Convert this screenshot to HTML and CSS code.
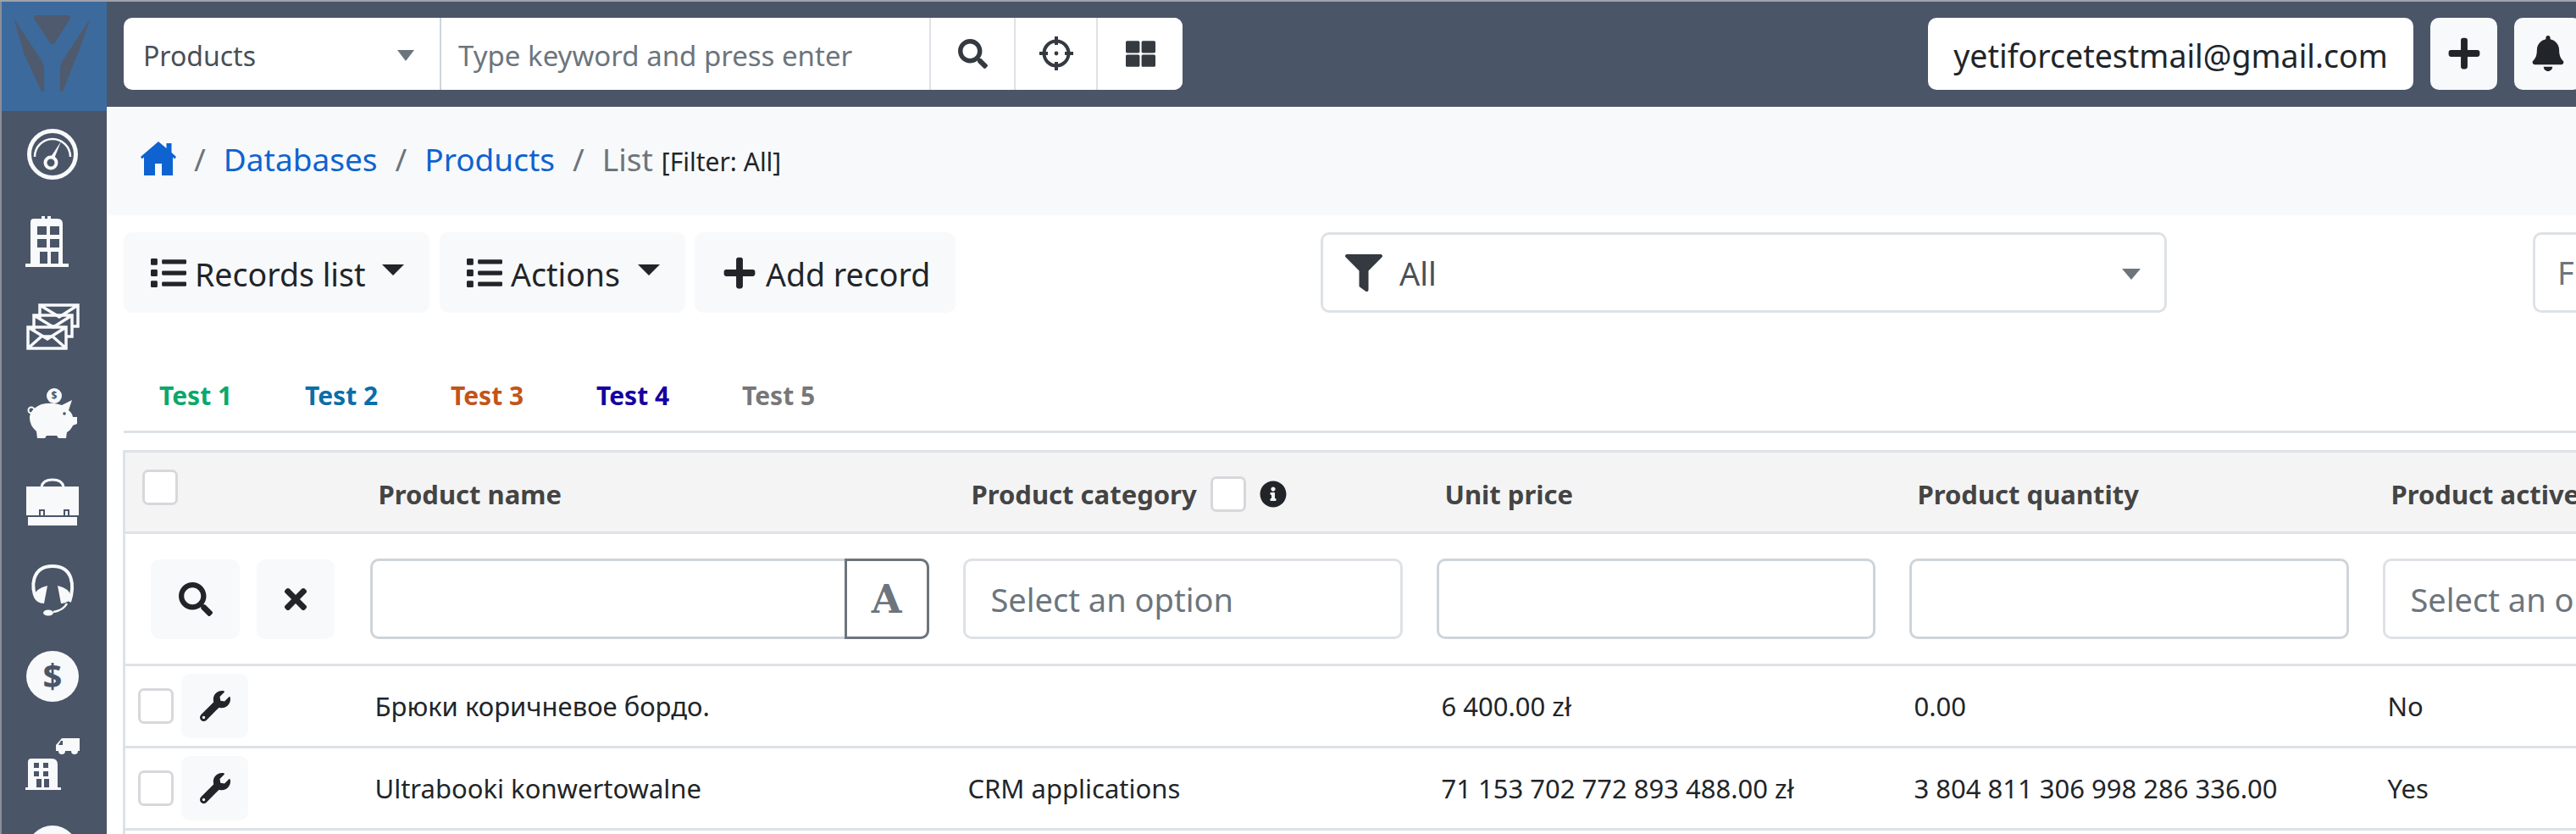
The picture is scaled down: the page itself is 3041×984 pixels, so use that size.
FILE: index.html
```html
<!DOCTYPE html>
<html lang="en">
<head>
<meta charset="utf-8">
<title>Products - List</title>
<link rel="stylesheet" href="styles.css">
</head>
<body>
<svg class="defs" aria-hidden="true">
  <symbol id="i-search" viewBox="0 0 512 512"><path d="M505 442.7L405.3 343c-4.5-4.5-10.6-7-17-7H372c27.6-35.3 44-79.7 44-128C416 93.1 322.9 0 208 0S0 93.1 0 208s93.1 208 208 208c48.3 0 92.7-16.4 128-44v16.3c0 6.4 2.5 12.5 7 17l99.7 99.7c9.4 9.4 24.6 9.4 33.9 0l28.3-28.3c9.4-9.4 9.4-24.6.1-34zM208 336c-70.7 0-128-57.2-128-128 0-70.7 57.2-128 128-128 70.7 0 128 57.2 128 128 0 70.7-57.2 128-128 128z"/></symbol>
  <symbol id="i-plus" viewBox="0 0 448 512"><path d="M416 208H272V64c0-17.67-14.33-32-32-32h-32c-17.67 0-32 14.33-32 32v144H32c-17.67 0-32 14.33-32 32v32c0 17.67 14.33 32 32 32h144v144c0 17.67 14.33 32 32 32h32c17.67 0 32-14.33 32-32V304h144c17.67 0 32-14.33 32-32v-32c0-17.67-14.33-32-32-32z"/></symbol>
  <symbol id="i-times" viewBox="0 0 352 512"><path d="M242.72 256l100.07-100.07c12.28-12.28 12.28-32.19 0-44.48l-22.24-22.24c-12.28-12.28-32.19-12.28-44.48 0L176 189.28 75.93 89.21c-12.28-12.28-32.19-12.28-44.48 0L9.21 111.45c-12.28 12.28-12.28 32.19 0 44.48L109.28 256 9.21 356.07c-12.28 12.28-12.28 32.19 0 44.48l22.24 22.24c12.28 12.28 32.2 12.28 44.48 0L176 322.72l100.07 100.07c12.28 12.28 32.2 12.28 44.48 0l22.24-22.24c12.28-12.28 12.28-32.19 0-44.48L242.72 256z"/></symbol>
  <symbol id="i-wrench" viewBox="0 0 512 512"><path d="M507.73 109.1c-2.24-9.03-13.54-12.09-20.12-5.51l-74.36 74.36-67.88-11.31-11.31-67.88 74.36-74.36c6.62-6.62 3.43-17.9-5.66-20.16-47.38-11.74-99.55.91-136.58 37.93-39.64 39.64-50.55 97.1-34.05 147.2L18.74 402.76c-24.99 24.99-24.99 65.51 0 90.5 24.99 24.99 65.51 24.99 90.5 0l213.21-213.21c50.12 16.71 107.47 5.68 147.37-34.22 37.07-37.07 49.7-89.32 37.91-136.73zM64 472c-13.25 0-24-10.75-24-24 0-13.26 10.75-24 24-24s24 10.74 24 24c0 13.25-10.75 24-24 24z"/></symbol>
  <symbol id="i-list" viewBox="0 0 512 512"><path d="M80 368H16a16 16 0 0 0-16 16v64a16 16 0 0 0 16 16h64a16 16 0 0 0 16-16v-64a16 16 0 0 0-16-16zm0-320H16A16 16 0 0 0 0 64v64a16 16 0 0 0 16 16h64a16 16 0 0 0 16-16V64a16 16 0 0 0-16-16zm0 160H16a16 16 0 0 0-16 16v64a16 16 0 0 0 16 16h64a16 16 0 0 0 16-16v-64a16 16 0 0 0-16-16zm416 176H176a16 16 0 0 0-16 16v32a16 16 0 0 0 16 16h320a16 16 0 0 0 16-16v-32a16 16 0 0 0-16-16zm0-320H176a16 16 0 0 0-16 16v32a16 16 0 0 0 16 16h320a16 16 0 0 0 16-16V80a16 16 0 0 0-16-16zm0 160H176a16 16 0 0 0-16 16v32a16 16 0 0 0 16 16h320a16 16 0 0 0 16-16v-32a16 16 0 0 0-16-16z"/></symbol>
  <symbol id="i-bell" viewBox="0 0 448 512"><path d="M224 512c35.32 0 63.97-28.65 63.97-64H160.03c0 35.35 28.65 64 63.97 64zm215.39-149.71c-19.32-20.76-55.47-51.99-55.47-154.29 0-77.7-54.48-139.9-127.94-155.16V32c0-17.67-14.32-32-31.98-32s-31.98 14.33-31.98 32v20.84C118.56 68.1 64.08 130.3 64.08 208c0 102.3-36.15 133.53-55.47 154.29-6 6.45-8.66 14.16-8.61 21.71.11 16.4 12.98 32 32.1 32h383.8c19.12 0 32-15.6 32.1-32 .05-7.55-2.61-15.27-8.61-21.71z"/></symbol>
  <symbol id="i-filter" viewBox="0 0 512 512"><path d="M487.976 0H24.028C2.71 0-8.047 25.866 7.058 40.971L192 225.941V432c0 7.831 3.821 15.17 10.237 19.662l80 55.98C298.02 518.69 320 507.493 320 487.98V225.941l184.947-184.97C520.021 25.896 509.338 0 487.976 0z"/></symbol>
  <symbol id="i-grid" viewBox="0 0 512 512"><path d="M296 32h192c13.255 0 24 10.745 24 24v160c0 13.255-10.745 24-24 24H296c-13.255 0-24-10.745-24-24V56c0-13.255 10.745-24 24-24zm-80 0H24C10.745 32 0 42.745 0 56v160c0 13.255 10.745 24 24 24h192c13.255 0 24-10.745 24-24V56c0-13.255-10.745-24-24-24zM0 296v160c0 13.255 10.745 24 24 24h192c13.255 0 24-10.745 24-24V296c0-13.255-10.745-24-24-24H24c-13.255 0-24 10.745-24 24zm296 184h192c13.255 0 24-10.745 24-24V296c0-13.255-10.745-24-24-24H296c-13.255 0-24 10.745-24 24v160c0 13.255 10.745 24 24 24z"/></symbol>
  <symbol id="i-info" viewBox="0 0 512 512"><path d="M256 8C119.043 8 8 119.083 8 256c0 136.997 111.043 248 248 248s248-111.003 248-248C504 119.083 392.957 8 256 8zm0 110c23.196 0 42 18.804 42 42s-18.804 42-42 42-42-18.804-42-42 18.804-42 42-42zm56 254c0 6.627-5.373 12-12 12h-88c-6.627 0-12-5.373-12-12v-24c0-6.627 5.373-12 12-12h12v-64h-12c-6.627 0-12-5.373-12-12v-24c0-6.627 5.373-12 12-12h64c6.627 0 12 5.373 12 12v100h12c6.627 0 12 5.373 12 12v24z"/></symbol>
  <symbol id="i-cross" viewBox="0 0 40 40"><circle cx="20" cy="20" r="14.500" fill="none" stroke="currentColor" stroke-width="4"/><path d="M18 0h4v10h-4zM18 30h4v10h-4zM0 18h10v4H0zM30 18h10v4H30z"/><circle cx="20" cy="20" r="2.400"/></symbol>
  <symbol id="i-home" viewBox="0 0 42 40"><path d="M21 0l9.500 8V2h6v11l5.500 5-1.800 2.500L38 18.500V40H25V26h-8v14H4V18.500L1.800 20.500 0 18z"/></symbol>
</svg>

<div class="app">
  <nav class="sidebar">
    <a class="logo" href="#">
      <svg viewBox="0 0 126 130" class="logo-svg"><path d="M43 16h37q4 0 3 4L65 49q-3 4-6 0L40 20q-1-4 3-4zM16 20l33 50q3 5 3 12v25h-3L28 62zM107 20L74 70q-3 5-3 12v25h3L92 62z"/></svg>
    </a>
    <a class="nav-item" href="#"><svg viewBox="0 0 64 64" class="nav-icon"><circle cx="32" cy="32" r="27.500" fill="none" stroke="currentColor" stroke-width="5"/><path d="M11 35a21 21 0 0 1 42 0" fill="none" stroke="currentColor" stroke-width="2.500"/><path d="M42 17L34 37l-4-2z"/><circle cx="30" cy="42" r="6.500" fill="none" stroke="currentColor" stroke-width="4"/></svg></a>
    <a class="nav-item" href="#"><svg viewBox="0 0 64 64" class="nav-icon"><path fill-rule="evenodd" d="M10 5h9V2h4v3h3V2h4v3h8q6 0 6 6v47h7v4H0v-4h6V9q0-4 4-4zM14 14v10h11V14zM29 14v10h11V14zM14 29v10h11V29zM29 29v10h11V29zM17 44v14h9V44zM30 44v14h9V44z"/></svg></a>
    <a class="nav-item" href="#"><svg viewBox="0 0 64 64" class="nav-icon"><g class="envs"><path d="M17 4h45v25H17zM17 4l23 14 22-14"/><path d="M10 16h45v25H10zM10 16l23 14 22-14"/><path d="M3 30h45v25H3zM3 30l23 14 22-14M3 55l17-15M48 55L31 40"/></g></svg></a>
    <a class="nav-item" href="#"><svg viewBox="0 0 64 64" class="nav-icon"><circle cx="34" cy="9" r="9"/><text x="34" y="13" class="pig-dollar">$</text><circle cx="7" cy="26" r="3.500" fill="none" stroke="currentColor" stroke-width="2"/><path d="M14 59l-1-8q-8-7-8-16 0-10 14-16 12-3 24 1l12-6-4 12q4 3 5 8h5v8l-5 2q-2 5-7 8l-1 7H39l-2-3H25l-2 3z"/><circle class="cut" cx="46" cy="30" r="1.800"/></svg></a>
    <a class="nav-item" href="#"><svg viewBox="0 0 64 64" class="nav-icon"><path d="M19 13q2-8 13-8t13 8" fill="none" stroke="currentColor" stroke-width="3"/><path d="M1 13h62v34H1zM3 49h58v10H3z"/><path class="buckle" d="M17 41h5v7h-5zM46 41h5v7h-5z"/></svg></a>
    <a class="nav-item" href="#"><svg viewBox="0 0 64 64" class="nav-icon"><path d="M13 42C6 30 7 4 32 4s26 24 20 42" fill="none" stroke="currentColor" stroke-width="4"/><path d="M26 27l-4 21q-9 0-12-8 2-10 16-13zM38 27l4 21q9 0 12-8-2-10-16-13z"/><path d="M49 48q-4 8-16 10" fill="none" stroke="currentColor" stroke-width="2.500"/><ellipse cx="27" cy="59" rx="6" ry="3.500"/></svg></a>
    <a class="nav-item" href="#"><svg viewBox="0 0 64 64" class="nav-icon"><ellipse cx="32" cy="32" rx="31" ry="30"/><text x="32" y="46" class="big-dollar">$</text></svg></a>
    <a class="nav-item" href="#"><svg viewBox="0 0 64 64" class="nav-icon"><path fill-rule="evenodd" d="M43 2h21v15h-2a4 4 0 0 1-8 0H47a4 4 0 0 1-8 0h-3v-7zM42 5l-3 5h5V5z"/><path fill-rule="evenodd" d="M7 26h24q7 0 7 7v27h4v3H0v-3h3V30q0-4 4-4zM10 31v6h6v-6zM21 31v6h6v-6zM10 41v6h6v-6zM21 41v6h6v-6zM13 50v10h6V50zM22 50v10h6V50z"/></svg></a>
    <a class="nav-item" href="#"><svg viewBox="0 0 64 64" class="nav-icon"><circle cx="32" cy="32" r="30"/></svg></a>
  </nav>

  <main class="main">
    <header class="topbar">
      <div class="search-group">
        <div class="search-select"><span>Products</span><i class="caret caret-grey"></i></div>
        <div class="search-input">Type keyword and press enter</div>
        <button class="search-btn btn-a"><svg class="ico ico-35"><use href="#i-search"/></svg></button>
        <button class="search-btn btn-b"><svg class="ico ico-40"><use href="#i-cross"/></svg></button>
        <button class="search-btn btn-c"><svg class="ico ico-35"><use href="#i-grid"/></svg></button>
      </div>
      <div class="user-tools">
        <div class="user-box">yetiforcetestmail@gmail.com</div>
        <button class="tool-btn"><svg class="ico ico-42"><use href="#i-plus"/></svg></button>
        <button class="tool-btn"><svg class="ico ico-42"><use href="#i-bell"/></svg></button>
      </div>
    </header>

    <div class="breadcrumb">
      <svg class="ico home"><use href="#i-home"/></svg>
      <span class="sep">/</span><a href="#">Databases</a>
      <span class="sep">/</span><a href="#">Products</a>
      <span class="sep">/</span><span class="crumb-now">List</span>
      <small class="crumb-filter">[Filter: All]</small>
    </div>

    <div class="toolbar">
      <div class="toolbar-left">
        <button class="act-btn act-records"><svg class="ico ico-list"><use href="#i-list"/></svg>Records list<i class="caret caret-dark"></i></button>
        <button class="act-btn act-actions"><svg class="ico ico-list"><use href="#i-list"/></svg>Actions<i class="caret caret-dark"></i></button>
        <button class="act-btn act-add"><svg class="ico ico-list"><use href="#i-plus"/></svg>Add record</button>
      </div>
      <div class="filter-select">
        <svg class="ico ico-filter"><use href="#i-filter"/></svg><span>All</span><i class="caret caret-grey caret-end"></i>
      </div>
      <div class="filter-box">F</div>
    </div>

    <ul class="tabs">
      <li class="tab t1">Test 1</li>
      <li class="tab t2">Test 2</li>
      <li class="tab t3">Test 3</li>
      <li class="tab t4">Test 4</li>
      <li class="tab t5">Test 5</li>
    </ul>

    <table class="grid">
      <colgroup>
        <col class="c0"><col class="c1"><col class="c2"><col class="c3"><col class="c4"><col class="c5">
      </colgroup>
      <thead>
        <tr class="head-row">
          <th class="cell-check-h"><span class="check"></span></th>
          <th>Product name</th>
          <th><span class="th-flex">Product category <span class="check"></span><svg class="ico ico-info"><use href="#i-info"/></svg></span></th>
          <th>Unit price</th>
          <th>Product quantity</th>
          <th>Product active</th>
        </tr>
        <tr class="filter-row">
          <td><div class="filter-actions"><button class="soft-btn soft-search"><svg class="ico ico-40d"><use href="#i-search"/></svg></button><button class="soft-btn soft-x"><svg class="ico ico-38d"><use href="#i-times"/></svg></button></div></td>
          <td><div class="field field-a"><span class="field-main"></span><span class="a-btn">A</span></div></td>
          <td><div class="field field-ph">Select an option</div></td>
          <td><div class="field field-num"></div></td>
          <td><div class="field field-num"></div></td>
          <td><div class="field field-ph">Select an option</div></td>
        </tr>
      </thead>
      <tbody>
        <tr class="row">
          <td><div class="row-actions"><span class="check"></span><button class="soft-btn soft-wrench"><svg class="ico ico-36d"><use href="#i-wrench"/></svg></button></div></td>
          <td>Брюки коричневое бордо.</td>
          <td></td>
          <td>6 400.00 zł</td>
          <td>0.00</td>
          <td>No</td>
        </tr>
        <tr class="row">
          <td><div class="row-actions"><span class="check"></span><button class="soft-btn soft-wrench"><svg class="ico ico-36d"><use href="#i-wrench"/></svg></button></div></td>
          <td>Ultrabooki konwertowalne</td>
          <td>CRM applications</td>
          <td>71 153 702 772 893 488.00 zł</td>
          <td>3 804 811 306 998 286 336.00</td>
          <td>Yes</td>
        </tr>
        <tr class="row"><td></td><td></td><td></td><td></td><td></td><td></td></tr>
      </tbody>
    </table>
  </main>
</div>
</body>
</html>
```

FILE: styles.css
```css
* { box-sizing: border-box; }
html { margin: 0; height: 984px; overflow: hidden; }
body {
  margin: 0;
  width: 3041px;
  height: 984px;
  overflow: hidden;
  background: #fff;
  color: #212529;
  font-family: "Noto Sans", "Open Sans", sans-serif;
  font-size: 31px;
  border-top: 2px solid #9ea3ad;
}
.defs { display: none; }
button { font: inherit; color: inherit; border: 0; padding: 0; }
a { text-decoration: none; color: #0e63d0; }
.ico { fill: currentColor; display: block; flex: none; }

.app { display: flex; height: 982px; }

/* sidebar */
.sidebar {
  width: 126px;
  flex: none;
  background: #4a5568;
  border-left: 2px solid #8a8f99;
  overflow: hidden;
  display: flex;
  flex-direction: column;
  color: #f8f9fa;
}
.logo { display: block; height: 129px; flex: none; background: #3d6a9c; margin-left: -2px; }
.logo-svg { display: block; width: 126px; height: 129px; fill: #4f5a6e; }
.nav-item {
  flex: none;
  height: 102.7px;
  padding-right: 4px;
  display: flex;
  align-items: center;
  justify-content: center;
  color: #f8f9fa;
}
.nav-icon { width: 64px; height: 64px; fill: currentColor; }
.cut { fill: #4a5568; }
.envs path { fill: #4a5568; stroke: #f8f9fa; stroke-width: 3.5; }
.buckle { fill: #f8f9fa; stroke: #4a5568; stroke-width: 2; }
.pig-dollar { font-size: 12px; text-anchor: middle; fill: #4a5568; font-weight: 700; }
.big-dollar { font-size: 40px; text-anchor: middle; fill: #4a5568; font-weight: 700; }

/* main */
.main { flex: 1; min-width: 0; overflow: hidden; }
.topbar {
  height: 124px;
  background: #4a5568;
  display: flex;
  align-items: center;
  justify-content: space-between;
  padding: 0 0 0 20px;
}
.search-group {
  display: flex;
  width: 1250px;
  height: 85px;
  margin-top: -2px;
  background: #fff;
  border-radius: 10px;
  overflow: hidden;
}
.search-select {
  width: 375px;
  flex: none;
  display: flex;
  align-items: center;
  justify-content: space-between;
  padding: 5px 30px 0 23px;
  color: #495057;
  border-right: 2px solid #ced4da;
  font-size: 32px;
}
.search-input {
  flex: 1;
  display: flex;
  align-items: center;
  padding: 4px 0 0 20px;
  color: #6c757d;
  font-size: 33px;
}
.search-btn {
  flex: none;
  display: flex;
  align-items: center;
  justify-content: center;
  background: #fff;
  color: #343a40;
  border-left: 2px solid #dee2e6;
}
.btn-a { width: 100px; }
.btn-b { width: 97px; }
.btn-c { width: 102px; }
.ico-35 { width: 35px; height: 35px; }
.ico-40 { width: 40px; height: 40px; }
.ico-42 { width: 42px; height: 42px; color: #212529; }
.ico-40d { width: 40px; height: 40px; color: #212529; }
.ico-38d { width: 38px; height: 38px; color: #212529; }
.ico-36d { width: 36px; height: 36px; color: #212529; }

.user-tools { display: flex; gap: 20px; margin-top: -2px; margin-right: -6px; flex: none; }
.user-box {
  width: 573px;
  height: 85px;
  background: #fff;
  border-radius: 10px;
  display: flex;
  align-items: center;
  justify-content: center;
  padding-top: 4px;
  font-size: 37.5px;
  color: #212529;
}
.tool-btn {
  width: 79px;
  height: 85px;
  background: #f8f9fa;
  border-radius: 10px;
  display: flex;
  align-items: center;
  justify-content: center;
}

/* breadcrumb */
.breadcrumb {
  height: 128px;
  background: #f8f9fa;
  display: flex;
  align-items: center;
  padding: 0 0 5px 40px;
  font-size: 37px;
  color: #6c757d;
}
.home { width: 42px; height: 40px; color: #0e63d0; margin-top: -2px; }
.sep { margin: 0 21px; color: #6c757d; }
.crumb-now { color: #6c757d; }
.crumb-filter { font-size: 30px; color: #212529; margin-left: 10px; margin-top: 6px; }

/* toolbar */
.toolbar {
  display: flex;
  padding: 20px 0 0 20px;
  white-space: nowrap;
}
.toolbar-left { display: flex; gap: 11px; flex: none; width: 982px; margin-right: 431px; }
.act-btn {
  height: 95px;
  padding: 3px 30px 0 32px;
  background: #f8f9fa;
  border-radius: 10px;
  display: flex;
  align-items: center;
  font-size: 37.5px;
  color: #212529;
  flex: none;
}
.act-records { width: 361px; }
.act-actions { width: 290px; margin-left: 1px; }
.act-add { width: 308px; }
.ico-list { width: 42px; height: 42px; margin-right: 10px; margin-top: -3px; }
.caret { display: inline-block; width: 0; height: 0; border-style: solid; border-color: transparent; border-width: 13px 10px 0; flex: none; }
.caret-grey { border-top-color: #6c757d; }
.caret-dark { border-width: 13px 13px 0; border-top-color: #212529; margin-left: auto; margin-top: -9px; }
.filter-select {
  width: 999px;
  height: 95px;
  flex: none;
  border: 3px solid #dee2e6;
  border-radius: 10px;
  display: flex;
  align-items: center;
  padding: 0 28px 0 26px;
  color: #495057;
  font-size: 38px;
}
.ico-filter { width: 44px; height: 44px; color: #343a40; margin-right: 20px; }
.caret-end { margin-left: auto; margin-top: 4px; border-width: 13px 11px 0; }
.filter-box {
  width: 200px;
  height: 95px;
  flex: none;
  margin-left: 432px;
  border: 3px solid #dee2e6;
  border-radius: 10px;
  padding: 0 0 0 26px;
  line-height: 89px;
  color: #6c757d;
  font-size: 38px;
}

/* tabs */
.tabs {
  list-style: none;
  margin: 0 0 0 20px;
  padding: 0 0 0 42px;
  height: 142px;
  display: flex;
  align-items: flex-end;
  border-bottom: 3px solid #dee2e6;
}
.tab { width: 172px; flex: none; font-size: 30px; font-weight: 700; padding-bottom: 21px; }
.t1 { color: #0aa86b; }
.t2 { color: #0a6ea8; }
.t3 { color: #c2541a; }
.t4 { color: #14009e; }
.t5 { color: #777; }

/* table */
.grid {
  table-layout: fixed;
  width: 3100px;
  margin: 20px 0 0 19px;
  border-collapse: collapse;
  border: 3px solid #dee2e6;
}
.c0 { width: 280px; }
.c1 { width: 700px; }
.c2, .c4, .c5 { width: 559px; }
.c3 { width: 558px; }
.grid th, .grid td { padding: 0 30px 0 10px; text-align: left; vertical-align: middle; white-space: nowrap; }
.head-row { height: 96px; background: #f4f4f5; border-bottom: 3px solid #dee2e6; }
.head-row th { font-size: 31px; font-weight: 700; color: #444; padding: 4px 0 0 20px; }
.grid .cell-check-h { padding: 0 0 12px 20px; }
.th-flex { display: inline-flex; align-items: center; gap: 16px; }
.filter-row { height: 156px; border-bottom: 3px solid #dee2e6; }
.row { height: 97px; border-bottom: 3px solid #dee2e6; font-size: 31px; }
.grid .row td { padding-left: 16px; }
.grid .row td:first-child { padding-left: 8px; }
.check {
  display: block;
  width: 42px;
  height: 42px;
  background: #fff;
  border: 3px solid #d6d8db;
  border-radius: 7px;
  flex: none;
}
.ico-info { width: 32px; height: 32px; color: #212529; }
.filter-actions { display: flex; gap: 20px; padding-left: 20px; }
.soft-btn {
  background: #f8f9fa;
  border-radius: 10px;
  display: flex;
  align-items: center;
  justify-content: center;
  flex: none;
}
.soft-search { width: 105px; height: 94px; }
.soft-x { width: 92px; height: 94px; }
.soft-wrench { width: 79px; height: 76px; }
.row-actions { display: flex; align-items: center; gap: 9px; padding-left: 7px; }
.field {
  height: 95px;
  border: 3px solid #dee2e6;
  border-radius: 10px;
  display: flex;
  align-items: center;
  font-size: 38px;
}
.field-ph { color: #6c757d; padding-left: 30px; }
.field-num { border-color: #ced4da; }
.field-a { border-color: #ced4da; }
.field-main { flex: 1; }
.a-btn {
  width: 100px;
  height: 95px;
  margin: -3px;
  border: 3px solid #6c757d;
  border-radius: 0 10px 10px 0;
  display: flex;
  align-items: center;
  justify-content: center;
  color: #6c757d;
  font-family: "DejaVu Serif", serif;
  font-weight: 700;
  font-size: 46px;
}
```
